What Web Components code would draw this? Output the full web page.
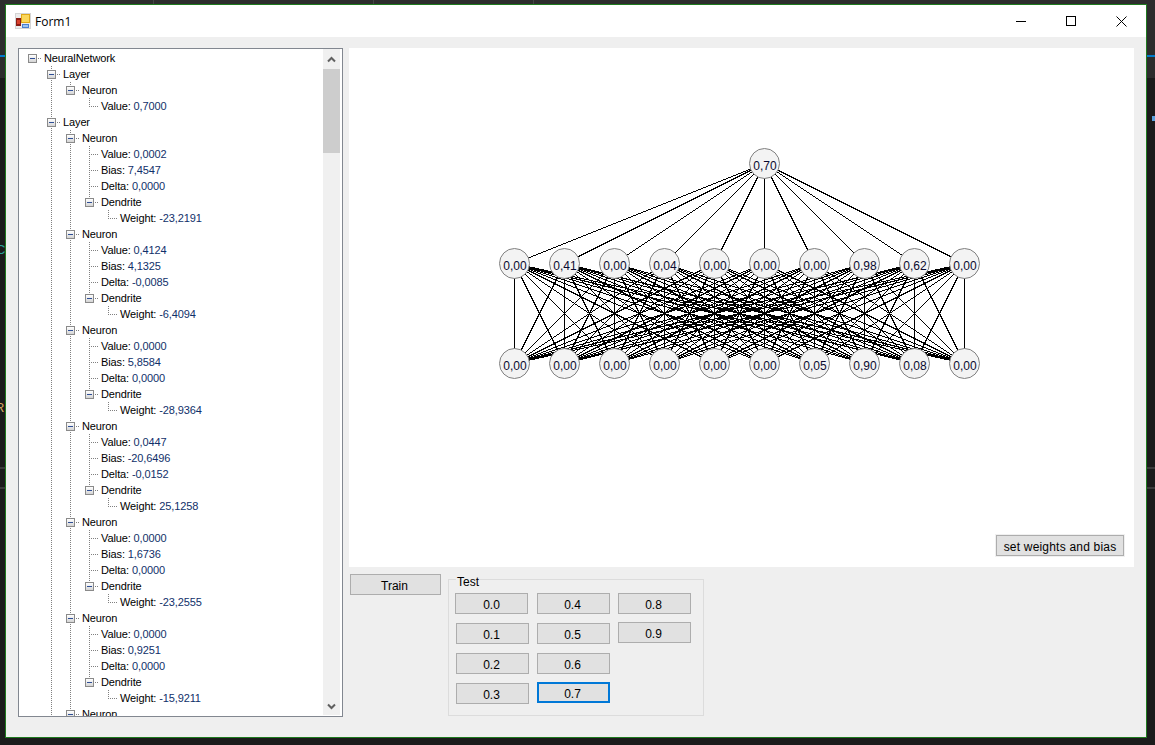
<!DOCTYPE html>
<html>
<head>
<meta charset="utf-8">
<title>Form1</title>
<style>
  html, body { margin: 0; height: 100%; }
  body {
    position: relative;
    overflow: hidden;
    font: 12px "Liberation Sans", Arial, sans-serif;
    color: #000;
    background:
      linear-gradient(#454545, #454545) 153px 0 / 1px 4px no-repeat,
      linear-gradient(#454545, #454545) 373px 0 / 1px 4px no-repeat,
      linear-gradient(#454545, #454545) 533px 0 / 1px 4px no-repeat,
      linear-gradient(#3a3a3a, #3a3a3a) 0 467px / 100% 2px no-repeat,
      linear-gradient(#3a3a3a, #3a3a3a) 0 487px / 100% 2px no-repeat,
      linear-gradient(#007acc, #007acc) 0 55px / 100% 2px no-repeat,
      linear-gradient(#2d2d2d, #2d2d2d) 0 0 / 100% 78px no-repeat,
      #1b1b1b;
  }
  .mark { position: absolute; font: 13px "Liberation Sans", Arial, sans-serif; line-height: 14px; }
  .pip { position: absolute; left: 1152px; top: 116px; width: 3px; height: 5px; background: #5aa0dc; }
</style>
</head>
<body>
<span class="mark" style="left:-4px;top:243px;color:#2aa198">C</span>
<span class="mark" style="left:-5px;top:401px;color:#d7a760">R</span>
<i class="pip"></i>
<form-window caption="Form1">
  <neural-form></neural-form>
</form-window>

<script>
class FormWindow extends HTMLElement {
  css = () => /*css*/ `
    :host {
      position: relative;
      display: flex;
      flex-direction: column;
      box-sizing: border-box;
      width: 1142px;
      height: 734px;
      margin: 4px 0 0 5px;
      border: 1px solid #1f7a1f;
      background: #efefef;
    }
    .bar {
      height: 32px;
      flex: none;
      display: flex;
      align-items: center;
      background: #fff;
    }
    .bar > svg { margin: 0 4px 1px 9px; }
    .bar > span {
      flex: 1;
      font: 12px "Open Sans", "Noto Sans", sans-serif;
    }
    .ctl {
      width: 50px;
      height: 32px;
      display: flex;
      align-items: center;
      justify-content: center;
    }
  `;

  html = () => /*html*/ `
    <style>${this.css()}</style>
    <div class="bar">
      <svg width="16" height="16" viewBox="0 0 16 16">
        <rect x="0" y="0" width="16" height="16" fill="#d4d4d4"/>
        <rect x="1" y="1" width="14" height="14" fill="#ececec"/>
        <rect x="6" y="1" width="9" height="9" fill="#e0a818"/>
        <rect x="7" y="2" width="7" height="7" fill="#fbd75b"/>
        <rect x="1" y="5" width="5" height="8" fill="#8c1c14"/>
        <rect x="2" y="7" width="3" height="4" fill="#d8402c"/>
        <rect x="7" y="11" width="7" height="4" fill="#4a7fd0"/>
        <rect x="8" y="12" width="5" height="2" fill="#9cc4f0"/>
      </svg>
      <span>${this.getAttribute("caption")}</span>
      <div class="ctl"><svg width="10" height="10" viewBox="0 0 10 10"><path d="M0 5.5H10" stroke="#000" fill="none"/></svg></div>
      <div class="ctl"><svg width="10" height="10" viewBox="0 0 10 10"><rect x=".5" y=".5" width="9" height="9" stroke="#000" fill="none"/></svg></div>
      <div class="ctl"><svg width="11" height="11" viewBox="0 0 11 11"><path d="M.5 .5L10.5 10.5M10.5 .5L.5 10.5" stroke="#000" fill="none"/></svg></div>
    </div>
    <slot></slot>
  `;

  constructor() {
    super();
    this.attachShadow({ mode: "open" });
  }

  connectedCallback() {
    this.shadowRoot.innerHTML = this.html();
  }
}

class WinButton extends HTMLElement {
  css = () => /*css*/ `
    :host {
      display: flex;
      align-items: center;
      justify-content: center;
      box-sizing: border-box;
      width: 73px;
      height: 21px;
      border: 1px solid #adadad;
      background: #e1e1e1;
      font-size: 12px;
      padding: 3px 2px 0 0;
      flex: none;
    }
    :host([focused]) {
      border: 2px solid #0078d7;
    }
  `;

  constructor() {
    super();
    this.attachShadow({ mode: "open" }).innerHTML = `<style>${this.css()}</style><slot></slot>`;
  }
}

class GroupBox extends HTMLElement {
  css = () => /*css*/ `
    :host {
      display: block;
      position: relative;
      box-sizing: border-box;
      border: 1px solid #dcdcdc;
      padding: 13px 7px 0;
    }
    .legend {
      position: absolute;
      left: 7px;
      top: -5px;
      padding: 0 1px;
      line-height: 14px;
      background: #efefef;
    }
    .cols {
      display: flex;
      gap: 8px;
    }
    ::slotted(div) {
      display: flex;
      flex-direction: column;
      gap: 9px;
    }
  `;

  constructor() {
    super();
    this.attachShadow({ mode: "open" }).innerHTML = `
      <style>${this.css()}</style>
      <span class="legend">${this.getAttribute("label")}</span>
      <div class="cols"><slot></slot></div>
    `;
  }
}

const neuron = (value, bias, delta, weight) => ({
  t: "Neuron",
  c: [
    { t: "Value: ", n: value },
    { t: "Bias: ", n: bias },
    { t: "Delta: ", n: delta },
    { t: "Dendrite", c: [{ t: "Weight: ", n: weight }] },
  ],
});

const TREE = {
  t: "NeuralNetwork",
  c: [
    { t: "Layer", c: [{ t: "Neuron", c: [{ t: "Value: ", n: "0,7000" }] }] },
    {
      t: "Layer",
      more: true,
      c: [
        neuron("0,0002", "7,4547", "0,0000", "-23,2191"),
        neuron("0,4124", "4,1325", "-0,0085", "-6,4094"),
        neuron("0,0000", "5,8584", "0,0000", "-28,9364"),
        neuron("0,0447", "-20,6496", "-0,0152", "25,1258"),
        neuron("0,0000", "1,6736", "0,0000", "-23,2555"),
        neuron("0,0000", "0,9251", "0,0000", "-15,9211"),
        { t: "Neuron", more: true, open: true },
      ],
    },
  ],
};

class TreeView extends HTMLElement {
  css = () => /*css*/ `
    :host {
      display: flex;
      box-sizing: border-box;
      border: 1px solid #828790;
      background: #fff;
      overflow: hidden;
    }
    .rows {
      flex: 1;
      min-width: 0;
      overflow: hidden;
      padding: 1px 0 0 4px;
    }
    .row {
      display: flex;
      height: 16px;
      line-height: 16px;
      white-space: nowrap;
      font-size: 11px;
      letter-spacing: -0.12px;
    }
    .row > span { margin-left: 2px; }
    .row em { font-style: normal; color: #10306a; }
    .cell {
      position: relative;
      display: block;
      width: 19px;
      height: 16px;
      flex: none;
    }
    .v::before, .half::before, .h::after {
      content: "";
      position: absolute;
    }
    .v::before, .half::before {
      left: 9px;
      top: 0;
      width: 1px;
      height: 16px;
      background: repeating-linear-gradient(#808080 0 1px, transparent 1px 2px);
    }
    .half::before { height: 8px; }
    .h::after {
      left: 9px;
      top: 8px;
      width: 10px;
      height: 1px;
      background: repeating-linear-gradient(90deg, #808080 0 1px, transparent 1px 2px);
    }
    .box {
      position: absolute;
      z-index: 1;
      left: 5px;
      top: 4px;
      box-sizing: border-box;
      width: 9px;
      height: 9px;
      border: 1px solid #8a8a8a;
      background: linear-gradient(#fff, #d4d4d4);
    }
    .box::after {
      content: "";
      position: absolute;
      left: 1px;
      top: 3px;
      width: 5px;
      height: 1px;
      background: #2f4f96;
    }
    .scroll {
      width: 17px;
      flex: none;
      margin: 0 2px 1px 0;
      display: flex;
      flex-direction: column;
      background: #f0f0f0;
    }
    .arrow {
      height: 20px;
      flex: none;
      display: flex;
      align-items: center;
      justify-content: center;
    }
    .thumb { height: 84px; flex: none; background: #cdcdcd; }
    .track { flex: 1; }
    .down { height: 17px; }
  `;

  walk(node, level, guides, last, root) {
    const kids = node.c || [];
    const expandable = kids.length > 0 || node.open;
    const cells = guides.map((g) => `<i class="cell${g ? " v" : ""}"></i>`).join("");
    const line = root ? "" : last ? "half" : "v";
    const box = expandable ? `<b class="box"></b>` : "";
    const num = node.n ? `<em>${node.n}</em>` : "";
    let html = `<div class="row">${cells}<i class="cell h ${line}">${box}</i><span>${node.t}${num}</span></div>`;
    kids.forEach((kid, i) => {
      const isLast = i === kids.length - 1 && !kid.more;
      html += this.walk(kid, level + 1, [...guides, root ? false : !last], isLast, false);
    });
    return html;
  }

  html = () => /*html*/ `
    <style>${this.css()}</style>
    <div class="rows">${this.walk(TREE, 0, [], true, true)}</div>
    <div class="scroll">
      <div class="arrow"><svg width="9" height="8" viewBox="0 0 9 8"><path d="M1 6.5L4.5 3L8 6.5" fill="none" stroke="#606060" stroke-width="2"/></svg></div>
      <div class="thumb"></div>
      <div class="track"></div>
      <div class="arrow down"><svg width="9" height="8" viewBox="0 0 9 8"><path d="M1 1.5L4.5 5L8 1.5" fill="none" stroke="#606060" stroke-width="2"/></svg></div>
    </div>
  `;

  constructor() {
    super();
    this.attachShadow({ mode: "open" });
  }

  connectedCallback() {
    this.shadowRoot.innerHTML = this.html();
  }
}

class NetDiagram extends HTMLElement {
  layers = [
    ["0,70"],
    ["0,00", "0,41", "0,00", "0,04", "0,00", "0,00", "0,00", "0,98", "0,62", "0,00"],
    ["0,00", "0,00", "0,00", "0,00", "0,00", "0,00", "0,05", "0,90", "0,08", "0,00"],
  ];

  css = () => /*css*/ `
    :host {
      display: block;
      position: absolute;
      inset: 0;
    }
    svg { display: block; }
    line { stroke: #000; shape-rendering: crispEdges; }
    circle { fill: #f3f3f3; stroke: #808080; }
    text { font: 12px "Liberation Sans", Arial, sans-serif; text-anchor: middle; fill: #0a0a30; }
  `;

  render() {
    const pos = this.layers.map((layer, l) =>
      layer.map((value, i) => ({
        value,
        x: layer.length === 1 ? 415.5 : 165.5 + i * 50,
        y: 115.5 + l * 100,
      }))
    );
    let lines = "";
    for (let l = 0; l < pos.length - 1; l++) {
      for (const a of pos[l]) {
        for (const b of pos[l + 1]) {
          lines += `<line x1="${a.x}" y1="${a.y}" x2="${b.x}" y2="${b.y}"/>`;
        }
      }
    }
    const nodes = pos.flat().map((n) => `
      <circle cx="${n.x}" cy="${n.y}" r="15"/>
      <text x="${n.x + 0.5}" y="${n.y + 6.5}">${n.value}</text>
    `).join("");
    this.shadowRoot.innerHTML = `
      <style>${this.css()}</style>
      <svg width="785" height="519" viewBox="0 0 785 519">${lines}${nodes}</svg>
    `;
  }

  constructor() {
    super();
    this.attachShadow({ mode: "open" });
  }

  connectedCallback() {
    this.render();
  }
}

class NeuralForm extends HTMLElement {
  css = () => /*css*/ `
    :host {
      display: flex;
      gap: 6px;
      padding: 11px 12px 0;
    }
    tree-view { width: 325px; height: 669px; flex: none; }
    .right { width: 785px; flex: none; display: flex; flex-direction: column; gap: 7px; }
    .canvas {
      position: relative;
      height: 519px;
      display: flex;
      justify-content: flex-end;
      align-items: flex-end;
      padding: 0 10px 11px 0;
      box-sizing: border-box;
      background: #fff;
    }
    .set {
      position: relative;
      width: 128px;
      padding-right: 0;
      letter-spacing: 0.2px;
      box-shadow: 0 0 0 1px #f0f0f0;
    }
    .tools { display: flex; gap: 7px; padding-left: 1px; }
    .train { width: 91px; }
    group-box { width: 256px; height: 137px; margin-top: 5px; }
    .shift { margin-left: -1px; padding-right: 0; }
    .up1 { margin-top: -1px; }
    .tight { gap: 8px; }
  `;

  html = () => /*html*/ `
    <style>${this.css()}</style>
    <tree-view></tree-view>
    <div class="right">
      <div class="canvas">
        <net-diagram></net-diagram>
        <win-button class="set">set weights and bias</win-button>
      </div>
      <div class="tools">
        <win-button class="train">Train</win-button>
        <group-box label="Test">
          <div>
            <win-button class="shift">0.0</win-button>
            <win-button>0.1</win-button>
            <win-button>0.2</win-button>
            <win-button>0.3</win-button>
          </div>
          <div>
            <win-button>0.4</win-button>
            <win-button>0.5</win-button>
            <win-button>0.6</win-button>
            <win-button class="up1" focused>0.7</win-button>
          </div>
          <div class="tight">
            <win-button>0.8</win-button>
            <win-button>0.9</win-button>
          </div>
        </group-box>
      </div>
    </div>
  `;

  constructor() {
    super();
    this.attachShadow({ mode: "open" });
  }

  connectedCallback() {
    this.shadowRoot.innerHTML = this.html();
  }
}

customElements.define("win-button", WinButton);
customElements.define("group-box", GroupBox);
customElements.define("tree-view", TreeView);
customElements.define("net-diagram", NetDiagram);
customElements.define("neural-form", NeuralForm);
customElements.define("form-window", FormWindow);
</script>
</body>
</html>
